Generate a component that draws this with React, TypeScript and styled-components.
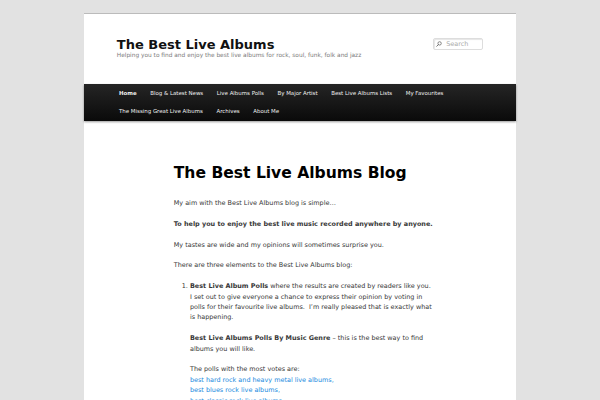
import styled, { createGlobalStyle } from "styled-components";

const GlobalStyle = createGlobalStyle`
  html {
    background: #e2e2e2;
  }
  body {
    margin: 0;
    padding: 0 13px;
    font-family: "DejaVu Sans", sans-serif;
    font-size: 6.45px;
    line-height: 10.4px;
    color: #373737;
  }
`;

const menu = [
  { label: "Home", current: true },
  { label: "Blog & Latest News" },
  { label: "Live Albums Polls" },
  { label: "By Major Artist" },
  { label: "Best Live Albums Lists" },
  { label: "My Favourites" },
  { label: "The Missing Great Live Albums" },
  { label: "Archives" },
  { label: "About Me" },
];

export default function App() {
  return (
    <>
      <GlobalStyle />
      <Page>
        <Branding>
          <HGroup>
            <SiteTitle>The Best Live Albums</SiteTitle>
            <SiteDescription>
              Helping you to find and enjoy the best live albums for rock, soul, funk, folk and jazz
            </SiteDescription>
          </HGroup>
          <SearchForm>
            <SearchIcon viewBox="0 0 10 10">
              <circle cx="6" cy="4" r="2.8" fill="none" stroke="#666" strokeWidth="1.3" />
              <line x1="4" y1="6" x2="1.2" y2="8.8" stroke="#666" strokeWidth="1.5" strokeLinecap="round" />
            </SearchIcon>
            <SearchInput placeholder="Search" />
          </SearchForm>
        </Branding>

        <Access>
          <MenuList>
            {menu.map((item) => (
              <li key={item.label}>
                <MenuLink href="#" $current={item.current}>
                  {item.label}
                </MenuLink>
              </li>
            ))}
          </MenuList>
        </Access>

        <Main>
          <Article>
            <EntryTitle>The Best Live Albums Blog</EntryTitle>
            <EntryContent>
              <p>My aim with the Best Live Albums blog is simple…</p>
              <p>
                <strong>To help you to enjoy the best live music recorded anywhere by anyone.</strong>
              </p>
              <p>My tastes are wide and my opinions will sometimes surprise you.</p>
              <p>There are three elements to the Best Live Albums blog:</p>
              <List>
                <li>
                  <p>
                    <strong>Best Live Album Polls</strong> where the results are created by readers like you.
                    <br />
                    I set out to give everyone a chance to express their opinion by voting in
                    <br />
                    polls for their favourite live albums.&nbsp; I’m really pleased that is exactly what
                    <br />
                    is happening.
                  </p>
                  <p>
                    <strong>Best Live Albums Polls By Music Genre</strong> – this is the best way to find
                    <br />
                    albums you will like.
                  </p>
                  <p>
                    The polls with the most votes are:
                    <br />
                    <Link href="#">best hard rock and heavy metal live albums,</Link>
                    <br />
                    <Link href="#">best blues rock live albums,</Link>
                    <br />
                    <Link href="#">best classic rock live albums,</Link>
                  </p>
                </li>
              </List>
            </EntryContent>
          </Article>
        </Main>
      </Page>
    </>
  );
}

const Page = styled.div`
  max-width: 432px;
  margin: 13px auto;
  background: #fff;
  min-height: 420px;
`;

const Branding = styled.header`
  border-top: 1px solid #bbb;
  display: flex;
  justify-content: space-between;
  align-items: flex-start;
  padding: 0 32.8px 24.7px;
`;

const HGroup = styled.div`
  padding-top: 23.8px;
`;

const SiteTitle = styled.h1`
  margin: 0;
  font-size: 13px;
  line-height: 13.5px;
  font-weight: bold;
  color: #111;
`;

const SiteDescription = styled.h2`
  margin: 0;
  font-size: 5.85px;
  line-height: 8px;
  font-weight: normal;
  color: #7a7a7a;
`;

const SearchForm = styled.form`
  position: relative;
  margin: 23.7px 0 0;
  display: flex;
`;

const SearchIcon = styled.svg`
  position: absolute;
  left: 3px;
  top: 3.2px;
  width: 6px;
  height: 6px;
`;

const SearchInput = styled.input`
  box-sizing: border-box;
  width: 50px;
  height: 12.4px;
  padding: 0 4px 0 12px;
  border: 1px solid #ddd;
  border-radius: 2px;
  box-shadow: inset 1px 1px 1px rgba(0, 0, 0, 0.1);
  font-family: "DejaVu Sans", sans-serif;
  font-size: 6.48px;
  color: #373737;
  outline: none;

  &::placeholder {
    color: #aaa;
  }
`;

const Access = styled.nav`
  background: linear-gradient(#252525, #0a0a0a);
  box-shadow: rgba(0, 0, 0, 0.4) 0 1px 2px;
  padding: 0 32.8px;
`;

const MenuList = styled.ul`
  display: flex;
  flex-wrap: wrap;
  list-style: none;
  margin: 0 0 0 -4.57px;
  padding: 0;
`;

const MenuLink = styled.a<{ $current?: boolean }>`
  display: block;
  padding: 0 6.8px;
  line-height: 18.5px;
  font-size: 5.45px;
  color: #eee;
  text-decoration: none;
  font-weight: ${(p) => (p.$current ? "bold" : "normal")};
`;

const Main = styled.main`
  padding: 41.6px 32.8px 0;
`;

const Article = styled.article`
  width: 68.9%;
  margin: 0 auto;
`;

const EntryTitle = styled.h1`
  margin: 0;
  padding-bottom: 4.67px;
  font-size: 15.55px;
  line-height: 20.7px;
  font-weight: bold;
  color: #000;
`;

const EntryContent = styled.div`
  padding-top: 10px;
  white-space: nowrap;

  p {
    margin: 0 0 10.4px;
  }

  strong {
    font-weight: bold;
  }
`;

const List = styled.ol`
  margin: 0 0 10.4px 16.2px;
  padding: 0;
  list-style: decimal;
`;

const Link = styled.a`
  color: #1b8be0;
  text-decoration: none;
`;
